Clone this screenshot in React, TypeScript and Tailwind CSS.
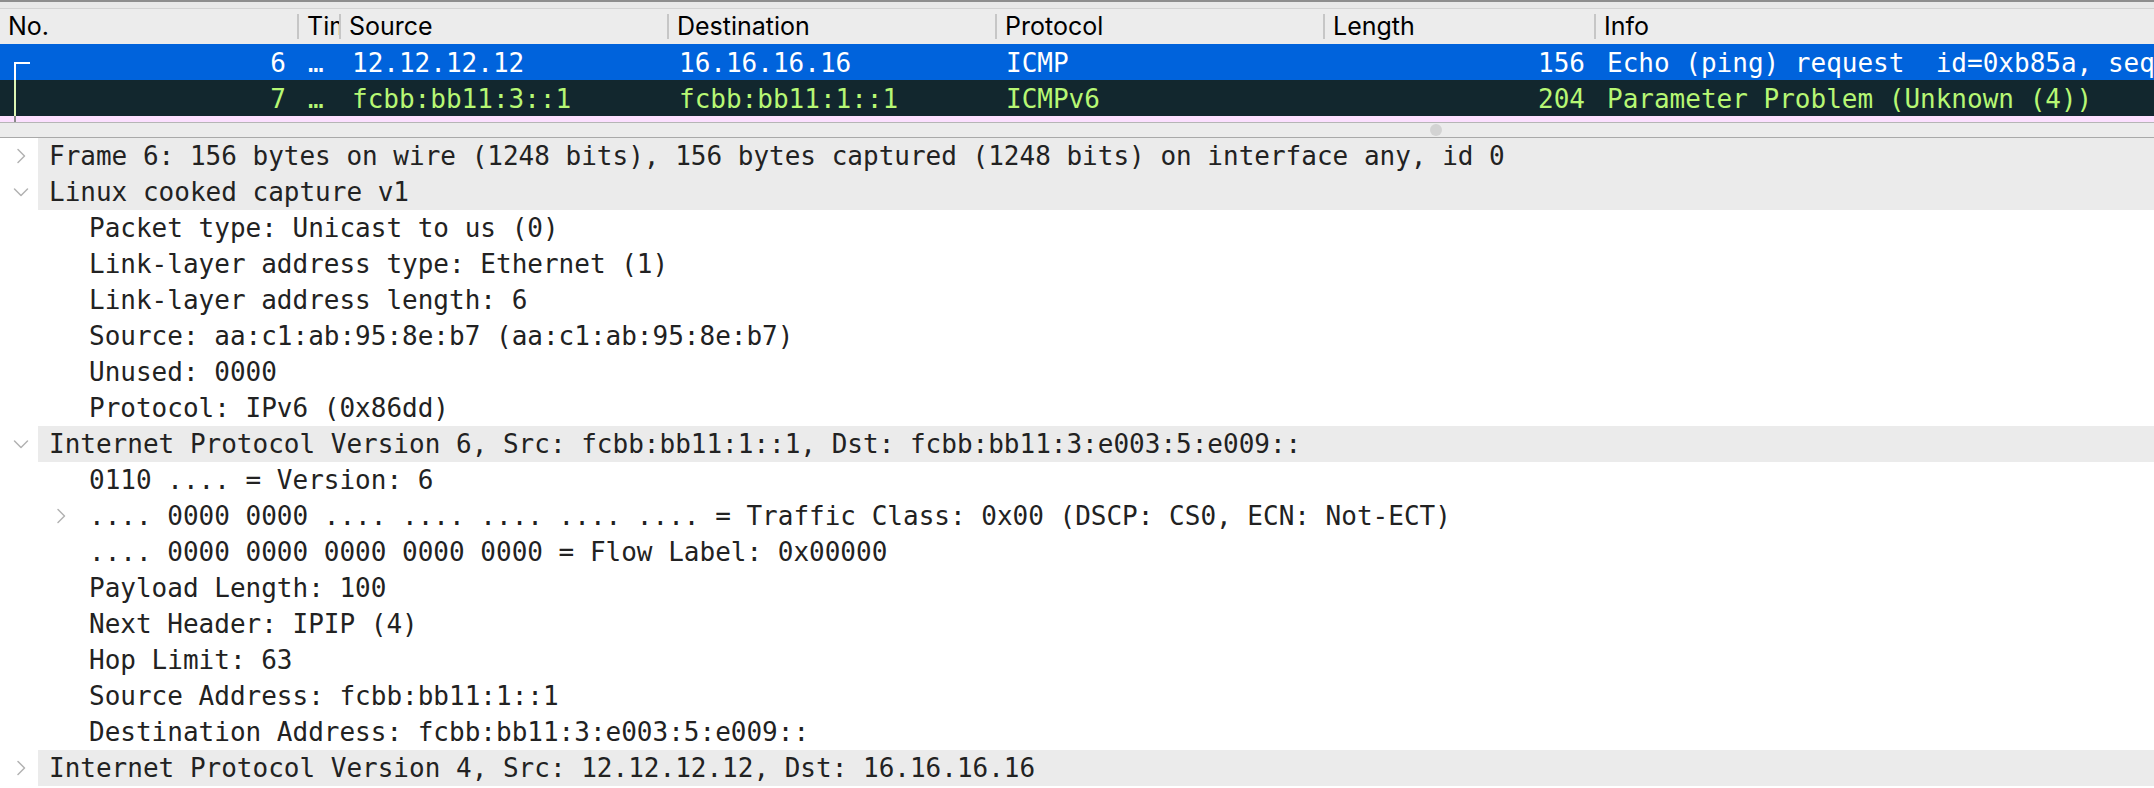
import type { ReactNode } from 'react';

const mono = { fontFamily: '"DejaVu Sans Mono", "Liberation Mono", monospace' };
const sans = { fontFamily: 'Inter, "Liberation Sans", sans-serif' };

const columns = ['No.', 'Time', 'Source', 'Destination', 'Protocol', 'Length', 'Info'];

interface Packet {
    no: string;
    src: string;
    dst: string;
    proto: string;
    len: string;
    info: string;
    bg: string;
    fg: string;
    line: string;
    first?: boolean;
    align: string;
}

const packets: Packet[] = [
    {
        no: '6', src: '12.12.12.12', dst: '16.16.16.16', proto: 'ICMP', len: '156',
        info: 'Echo (ping) request  id=0xb85a, seq=1/256, ttl=63 (no response found!)',
        bg: 'bg-[#0063dc]', fg: 'text-white', line: 'bg-white', first: true, align: 'items-center',
    },
    {
        no: '7', src: 'fcbb:bb11:3::1', dst: 'fcbb:bb11:1::1', proto: 'ICMPv6', len: '204',
        info: 'Parameter Problem (Unknown (4))',
        bg: 'bg-[#12272e]', fg: 'text-[#b7f774]', line: 'bg-[#dcf3b4]', align: 'items-center',
    },
    {
        // only the top few pixels of this row show under the list's edge
        no: '10', src: '12.12.12.12', dst: '16.16.16.16', proto: 'ICMP', len: '156',
        info: 'Echo (ping) request  id=0xb85a, seq=1/256, ttl=63 (reply in 11)',
        bg: 'bg-[#fce0ff]', fg: 'text-[#12272e]', line: 'bg-[#8a8a8a]', align: 'items-start',
    },
];

interface Node {
    text: string;
    level: 0 | 1;
    chevron?: 'right' | 'down';
}

const details: Node[] = [
    { text: 'Frame 6: 156 bytes on wire (1248 bits), 156 bytes captured (1248 bits) on interface any, id 0', level: 0, chevron: 'right' },
    { text: 'Linux cooked capture v1', level: 0, chevron: 'down' },
    { text: 'Packet type: Unicast to us (0)', level: 1 },
    { text: 'Link-layer address type: Ethernet (1)', level: 1 },
    { text: 'Link-layer address length: 6', level: 1 },
    { text: 'Source: aa:c1:ab:95:8e:b7 (aa:c1:ab:95:8e:b7)', level: 1 },
    { text: 'Unused: 0000', level: 1 },
    { text: 'Protocol: IPv6 (0x86dd)', level: 1 },
    { text: 'Internet Protocol Version 6, Src: fcbb:bb11:1::1, Dst: fcbb:bb11:3:e003:5:e009::', level: 0, chevron: 'down' },
    { text: '0110 .... = Version: 6', level: 1 },
    { text: '.... 0000 0000 .... .... .... .... .... = Traffic Class: 0x00 (DSCP: CS0, ECN: Not-ECT)', level: 1, chevron: 'right' },
    { text: '.... 0000 0000 0000 0000 0000 = Flow Label: 0x00000', level: 1 },
    { text: 'Payload Length: 100', level: 1 },
    { text: 'Next Header: IPIP (4)', level: 1 },
    { text: 'Hop Limit: 63', level: 1 },
    { text: 'Source Address: fcbb:bb11:1::1', level: 1 },
    { text: 'Destination Address: fcbb:bb11:3:e003:5:e009::', level: 1 },
    { text: 'Internet Protocol Version 4, Src: 12.12.12.12, Dst: 16.16.16.16', level: 0, chevron: 'right' },
];

function Chevron({ dir }: { dir?: 'right' | 'down' }) {
    if (!dir) return null;
    return (
        <svg width="16" height="16" viewBox="0 0 16 16" fill="none" stroke="#b2b2b2" strokeWidth="1.5" strokeLinecap="round" strokeLinejoin="round">
            {dir === 'right' ? <path d="M5 1.5 L11.5 8 L5 14.5" /> : <path d="M1.5 5 L8 11.5 L14.5 5" />}
        </svg>
    );
}

function DetailRow({ node }: { node: Node }) {
    if (node.level === 0) {
        return (
            <div className="flex h-[36px]">
                <div className="w-[38px] flex items-center justify-center pl-[3px]">
                    <Chevron dir={node.chevron} />
                </div>
                <div className="flex-1 flex items-center pl-[11px] bg-[#ebebeb] whitespace-pre">{node.text}</div>
            </div>
        );
    }
    return (
        <div className="flex h-[36px]">
            <div className="w-[42px]" />
            <div className="w-[38px] flex items-center justify-center">
                <Chevron dir={node.chevron} />
            </div>
            <div className="flex-1 flex items-center pl-[9px] whitespace-pre">{node.text}</div>
        </div>
    );
}

function Cell({ children, className }: { children: ReactNode; className?: string }) {
    return <div className={`h-full flex overflow-hidden whitespace-pre ${className ?? ''}`}>{children}</div>;
}

export default function App() {
    return (
        <div className="w-[2154px] h-[788px] overflow-hidden bg-white text-[#222222]">
            <div className="h-[2px] bg-[#8d8d8d]" />
            <div className="h-[6px] bg-[#e8e8e8]" />
            <div className="h-px bg-[#d2d2d2]" />

            {/* column header */}
            <div className="grid grid-cols-[297px_42px_328px_328px_328px_271px_1fr] h-[35px] bg-[#ececec] text-[25px] text-black" style={sans}>
                {columns.map((c, i) => (
                    <div key={c} className="h-full flex items-center overflow-hidden whitespace-nowrap">
                        {i > 0 && <span className="shrink-0 h-[25px] w-[2px] bg-[#c6c6c6]" />}
                        <span className="pl-[8px]">{c}</span>
                    </div>
                ))}
            </div>

            {/* packet list */}
            <div className="h-[78px] overflow-hidden text-[26px]" style={mono}>
                {packets.map((p) => (
                    <div key={p.no} className={`grid grid-cols-[297px_42px_328px_328px_328px_271px_1fr] h-[36px] ${p.bg} ${p.fg}`}>
                        <div className="relative h-full">
                            {p.first ? (
                                <>
                                    <span className={`absolute left-[14px] top-[18px] bottom-0 w-[2px] ${p.line}`} />
                                    <span className={`absolute left-[14px] top-[18px] w-[16px] h-[2px] ${p.line}`} />
                                </>
                            ) : (
                                <span className={`absolute left-[14px] top-0 bottom-0 w-[2px] ${p.line}`} />
                            )}
                            <Cell className={`${p.align} justify-end pr-[11px]`}>{p.no}</Cell>
                        </div>
                        <Cell className={`${p.align} pl-[11px]`}>…</Cell>
                        <Cell className={`${p.align} pl-[13px]`}>{p.src}</Cell>
                        <Cell className={`${p.align} pl-[12px]`}>{p.dst}</Cell>
                        <Cell className={`${p.align} pl-[11px]`}>{p.proto}</Cell>
                        <Cell className={`${p.align} justify-end pr-[9px]`}>{p.len}</Cell>
                        <Cell className={`${p.align} pl-[13px]`}>{p.info}</Cell>
                    </div>
                ))}
            </div>

            {/* splitter */}
            <div className="h-px bg-[#b6b6b6]" />
            <div className="h-[14px] bg-[#ececec] flex items-center pl-[1430px]">
                <span className="w-[12px] h-[12px] rounded-full bg-[#d3d3d3]" />
            </div>
            <div className="h-px bg-[#a9a9a9]" />

            {/* packet details */}
            <div className="text-[26px]" style={mono}>
                {details.map((n, i) => (
                    <DetailRow key={i} node={n} />
                ))}
            </div>
        </div>
    );
}
